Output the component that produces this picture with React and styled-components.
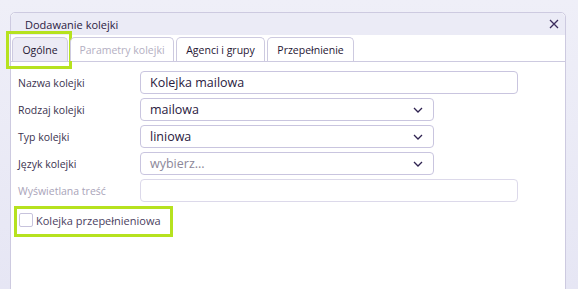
import React from 'react';
import styled, { createGlobalStyle } from 'styled-components';

const Global = createGlobalStyle`
  html, body { margin: 0; padding: 0; }
  body {
    background: #e9e9f5;
    font-family: "Open Sans", "Liberation Sans", sans-serif;
    overflow: hidden;
  }
`;

const Page = styled.div`
  width: 578px;
  height: 289px;
  padding: 12px 12px 0 10px;
  box-sizing: border-box;
  background: linear-gradient(180deg, #efeff8 0%, #e6e6f4 100%);
  overflow: hidden;
`;

const Dialog = styled.div`
  height: 290px;
  background: #fff;
  border: 1px solid #cdcae0;
  border-radius: 5px;
  box-sizing: border-box;
`;

const Header = styled.div`
  height: 22px;
  background: #ebebf6;
  border-radius: 5px 5px 0 0;
  display: flex;
  align-items: center;
  justify-content: space-between;
  padding: 0 6px 0 14px;
  font-size: 11px;
  color: #2c2142;
`;

const Close = styled.button`
  border: 0;
  background: none;
  padding: 0;
  width: 10px;
  height: 10px;
  display: flex;
  cursor: pointer;
`;

const TabBar = styled.div`
  display: flex;
  gap: 2px;
  padding: 2px 0 0 1px;
  border-bottom: 1px solid #cdcae0;
`;

const Tab = styled.div`
  position: relative;
  width: ${p => p.$w}px;
  height: 24px;
  box-sizing: border-box;
  display: flex;
  align-items: center;
  justify-content: center;
  font-size: 10.5px;
  border: 1px solid #cdcae0;
  border-bottom: 0;
  border-radius: 5px 5px 0 0;
  background: ${p => (p.$active ? '#ecebf5' : '#fff')};
  color: ${p => (p.$disabled ? '#b4afc2' : '#1f1633')};
`;

const Highlight = styled.span`
  position: absolute;
  top: ${p => p.$t}px;
  right: ${p => p.$r}px;
  bottom: ${p => p.$b}px;
  left: ${p => p.$l}px;
  border: 3px solid #b6e21f;
  pointer-events: none;
`;

const Form = styled.div`
  padding: 9px 0 0 7px;
  display: flex;
  flex-direction: column;
  gap: 4px;
`;

const Row = styled.div`
  display: flex;
  align-items: center;
  height: 23px;
`;

const Label = styled.div`
  width: 122px;
  font-size: 10.5px;
  color: ${p => (p.$muted ? '#a9a4b9' : '#3b3350')};
`;

const Field = styled.div`
  width: ${p => p.$w}px;
  height: 23px;
  box-sizing: border-box;
  border: 1px solid ${p => (p.$light ? '#dcd9ea' : '#c9c5df')};
  border-radius: 4px;
  display: flex;
  align-items: center;
  justify-content: space-between;
  padding: 0 10px 0 9px;
  font-size: 12.5px;
  color: ${p => (p.$placeholder ? '#8c8799' : '#2a2040')};
`;

const CheckRow = styled.label`
  position: relative;
  align-self: flex-start;
  display: flex;
  align-items: center;
  gap: 3px;
  margin-top: 7px;
  margin-left: 1px;
  height: 14px;
  font-size: 11px;
  color: #4a4160;
`;

const Box = styled.span`
  width: 14px;
  height: 14px;
  box-sizing: border-box;
  border: 1px solid #c7c3dc;
  border-radius: 2px;
  background: #fff;
`;

const Chevron = () => (
  <svg width="10" height="6" viewBox="0 0 10 6">
    <path d="M1 1l4 4 4-4" fill="none" stroke="#2e2250" strokeWidth="1.3" />
  </svg>
);

const tabs = [
  { name: 'Ogólne', w: 56, active: true },
  { name: 'Parametry kolejki', w: 104, disabled: true },
  { name: 'Agenci i grupy', w: 89 },
  { name: 'Przepełnienie', w: 87 },
];

const rows = [
  { label: 'Nazwa kolejki', value: 'Kolejka mailowa', w: 378 },
  { label: 'Rodzaj kolejki', value: 'mailowa', w: 294, select: true },
  { label: 'Typ kolejki', value: 'liniowa', w: 294, select: true },
  { label: 'Język kolejki', value: 'wybierz...', w: 294, select: true, placeholder: true },
  { label: 'Wyświetlana treść', value: '', w: 378, muted: true, light: true },
];

export default function App() {
  return (
    <>
      <Global />
      <Page>
        <Dialog>
          <Header>
            <span>Dodawanie kolejki</span>
            <Close aria-label="Zamknij">
              <svg width="10" height="10" viewBox="0 0 10 10">
                <path d="M1 1l8 8M9 1l-8 8" stroke="#3a2b5c" strokeWidth="1.3" />
              </svg>
            </Close>
          </Header>
          <TabBar>
            {tabs.map(t => (
              <Tab key={t.name} $w={t.w} $active={t.active} $disabled={t.disabled}>
                {t.name}
                {t.active && <Highlight $t={-7} $r={-5} $b={-8} $l={-7} />}
              </Tab>
            ))}
          </TabBar>
          <Form>
            {rows.map(r => (
              <Row key={r.label}>
                <Label $muted={r.muted}>{r.label}</Label>
                <Field $w={r.w} $light={r.light} $placeholder={r.placeholder}>
                  <span>{r.value}</span>
                  {r.select && <Chevron />}
                </Field>
              </Row>
            ))}
            <CheckRow>
              <Box />
              <span>Kolejka przepełnieniowa</span>
              <Highlight $t={-7} $r={-12} $b={-10} $l={-5} />
            </CheckRow>
          </Form>
        </Dialog>
      </Page>
    </>
  );
}
